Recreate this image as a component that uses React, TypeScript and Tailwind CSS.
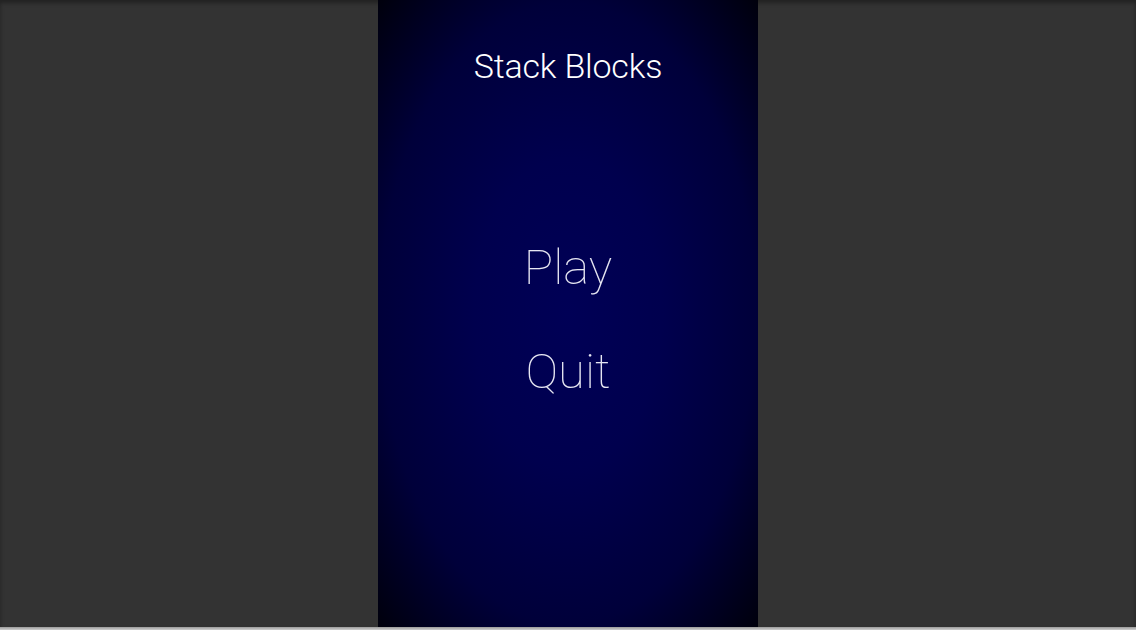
export default function App() {
  return (
    <div className="flex h-[630px] w-full flex-col bg-[#333333] font-['Roboto',sans-serif]">
      <div className="flex flex-1 justify-center shadow-[inset_0_3px_4px_rgba(0,0,0,0.35)]">
        <div className="flex h-[627px] w-[380px] flex-col items-center bg-[radial-gradient(ellipse_at_center,#000056_0%,#00004e_35%,#00003a_70%,#00000c_100%)] text-white">
          <h1 className="mt-[43px] text-[34px] font-light leading-[46px] tracking-[-0.2px]">
            Stack Blocks
          </h1>
          <div className="mt-[150px] flex flex-col items-center gap-[46px]">
            <button className="text-[49px] font-thin leading-[58px] text-[#e6e6f2]">Play</button>
            <button className="text-[49px] font-thin leading-[58px] text-[#e6e6f2]">Quit</button>
          </div>
        </div>
      </div>
      <div className="h-[3px] bg-[linear-gradient(#9a9a9a,#d0d0d0)]" />
    </div>
  );
}
